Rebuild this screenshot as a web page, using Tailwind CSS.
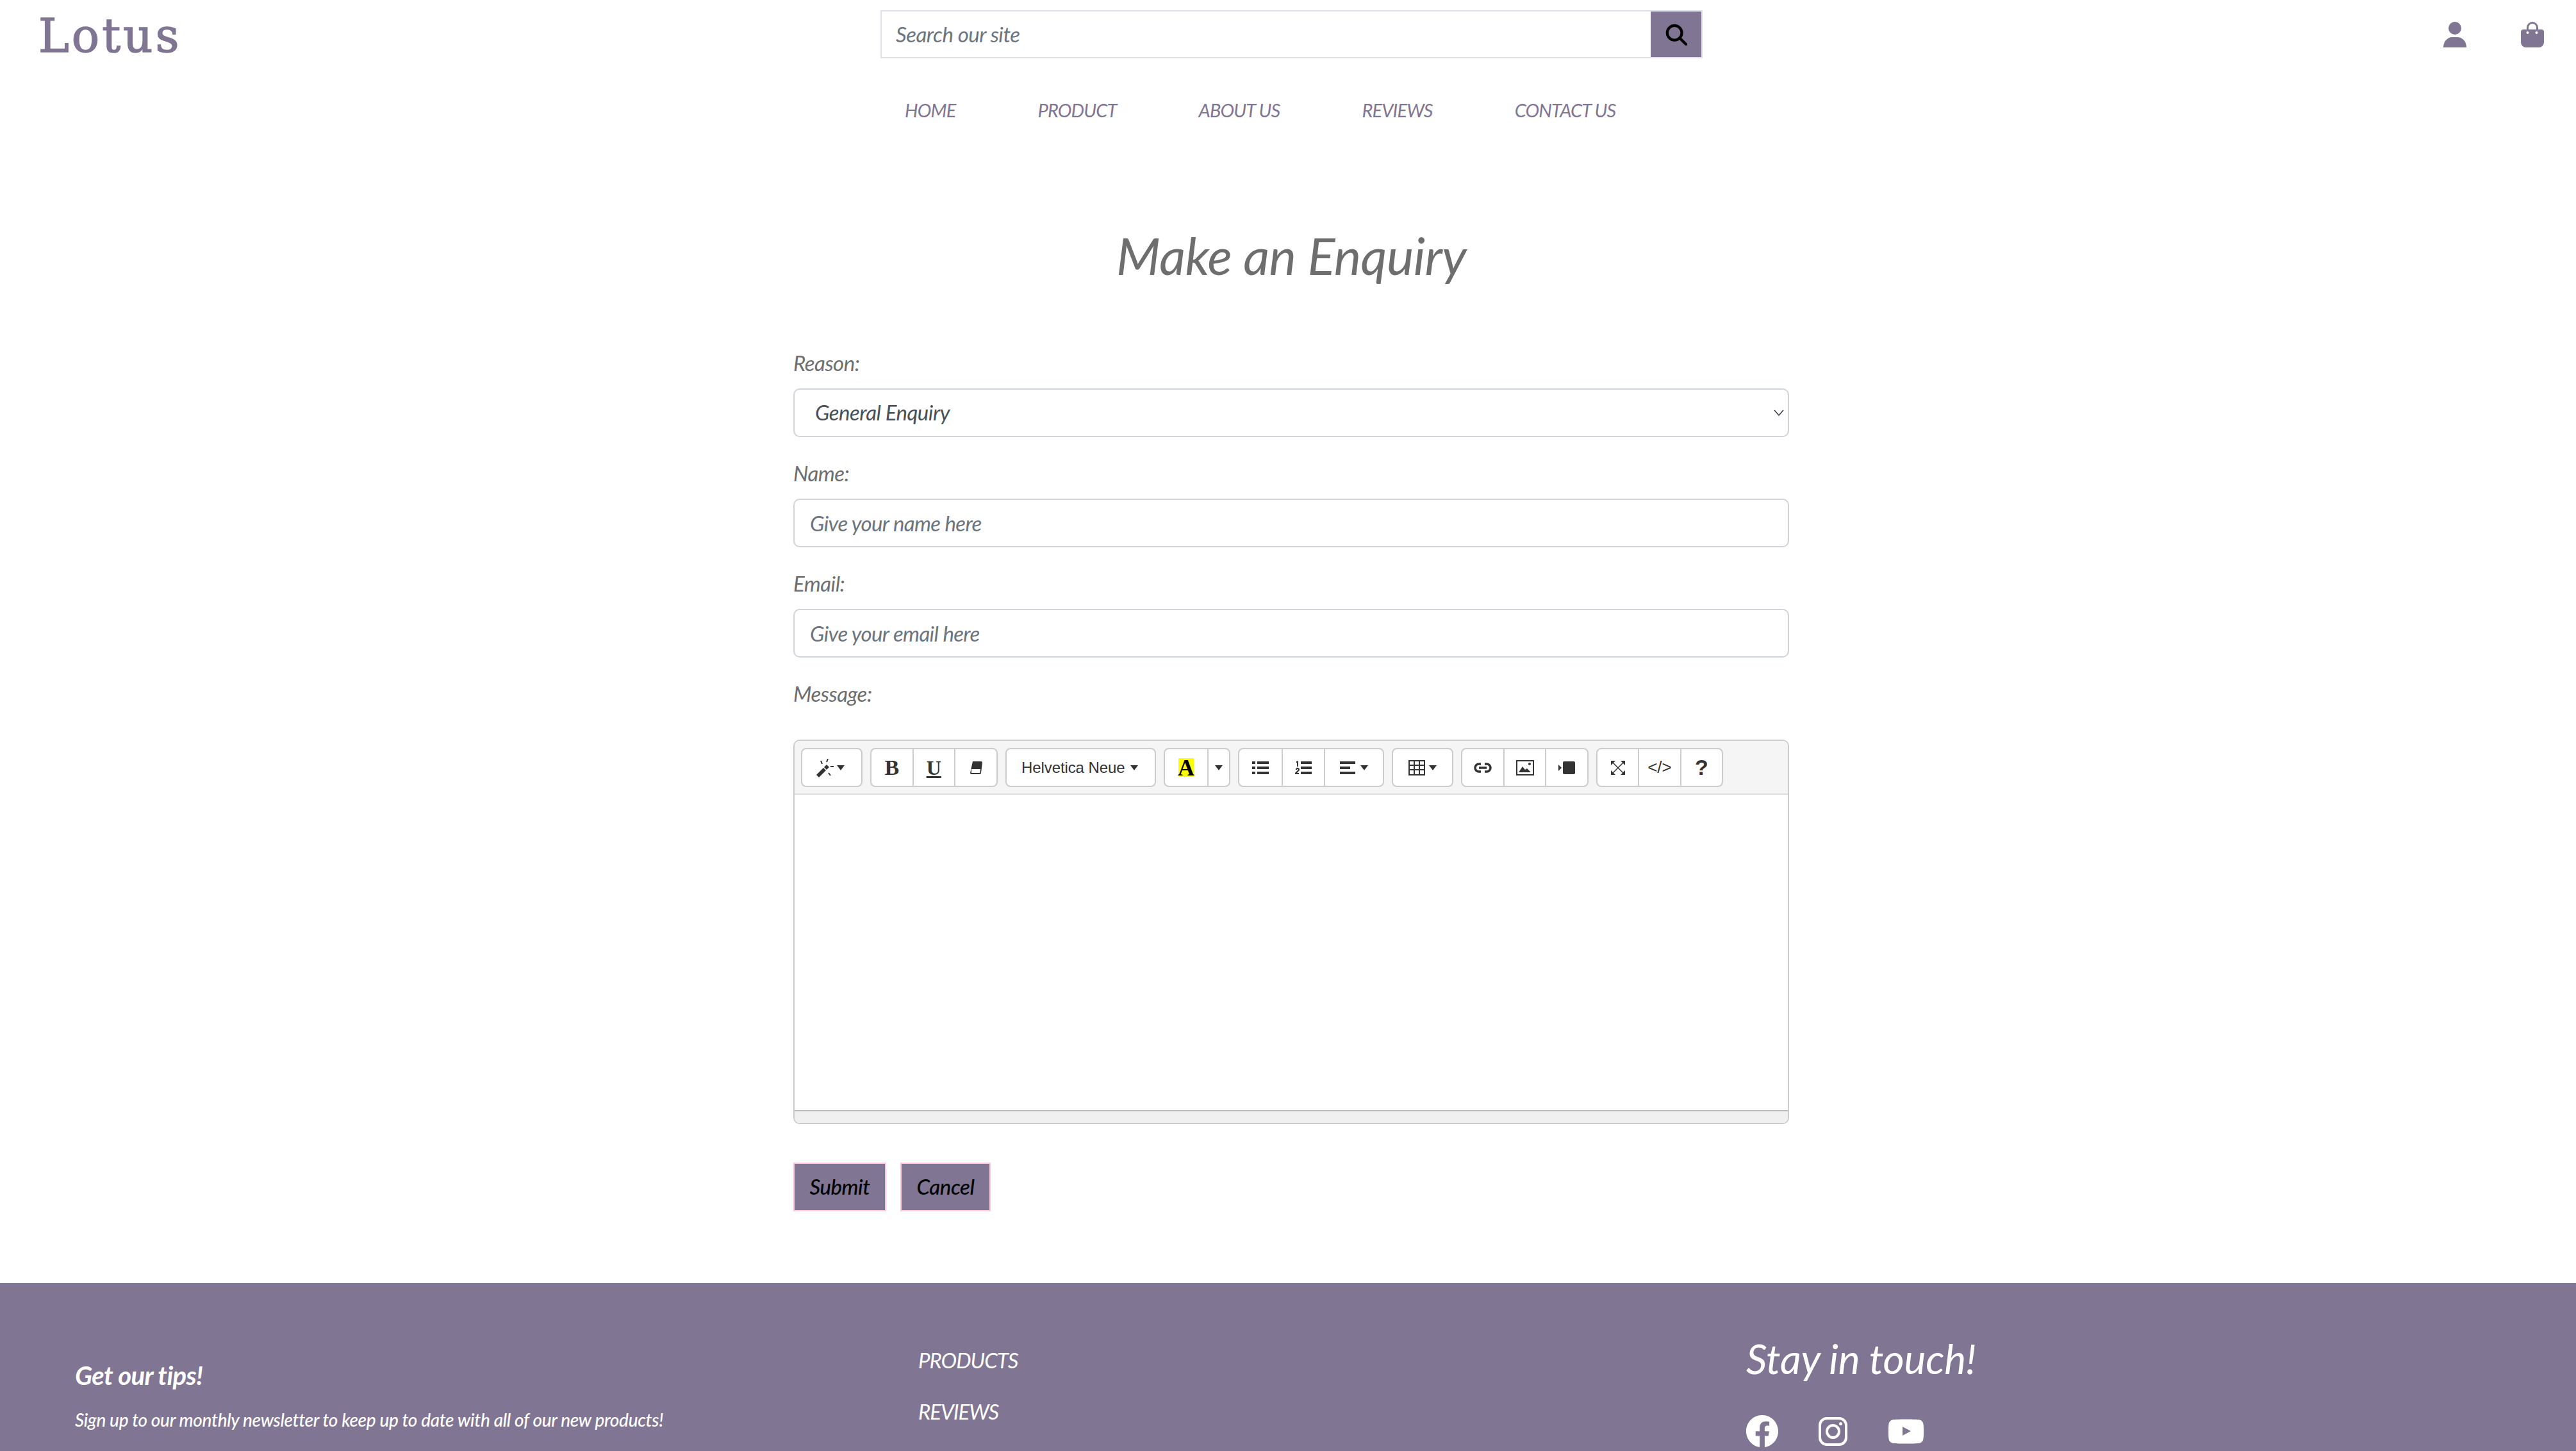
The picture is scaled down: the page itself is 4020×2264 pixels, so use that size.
<!DOCTYPE html>
<html lang="en">
<head>
  <meta charset="UTF-8" />
  <title>Lotus - Make an Enquiry</title>
  <script src="https://cdn.jsdelivr.net/npm/@tailwindcss/browser@4"></script>
</head>
<body class="h-[2264px] overflow-hidden bg-white font-['Lato',sans-serif] italic text-[#6c757d]">

  <!-- Header -->
  <header class="grid grid-cols-[1374px_1283px_1fr] pt-[16px]">
    <a class="pl-[60px] pt-[4px] h-[75px] flex items-center font-['DejaVu_Serif',serif] not-italic text-[72px] tracking-[4px] [-webkit-text-stroke:1.5px_#807593] text-[#807593]">Lotus</a>
    <div>
      <form class="flex h-[75px] border-[2.5px] border-[#dee2e6]">
        <input placeholder="Search our site" class="flex-1 pl-[22px] text-[33px] tracking-[-0.5px] italic outline-none placeholder:text-[#6c757d]" />
        <button type="button" class="w-[79px] bg-[#807593] flex items-center justify-center">
          <svg width="34" height="34" viewBox="0 0 24 24" fill="none" stroke="#000" stroke-width="3"><circle cx="10" cy="10" r="8"/><path d="M16 16l7 7" stroke-linecap="round"/></svg>
        </button>
      </form>
      <nav class="mt-[61px] h-[40px] flex items-center pl-[38px] gap-[128px] text-[29px] tracking-[-0.85px] text-[#807593] whitespace-nowrap">
        <a>HOME</a>
        <a>PRODUCT</a>
        <a>ABOUT US</a>
        <a>REVIEWS</a>
        <a>CONTACT US</a>
      </nav>
    </div>
    <div class="flex justify-end h-[75px] items-center gap-[85px] pr-[50px]">
      <svg width="36" height="40" viewBox="0 0 36 40" fill="#807593"><circle cx="18" cy="10" r="10"/><path d="M0 40c0-10 7-16 14-16h8c7 0 14 6 14 16z"/></svg>
      <svg width="36" height="40" viewBox="0 0 36 40" fill="#807593" fill-rule="evenodd"><path d="M9 12V9a9 9 0 0 1 18 0v3h5a4 4 0 0 1 4 4v16a8 8 0 0 1-8 8H8a8 8 0 0 1-8-8V16a4 4 0 0 1 4-4zm3 0h12V9a6 6 0 0 0-12 0zm-1.500 3a2 2 0 1 0 .01 0zm14 0a2 2 0 1 0 .01 0z"/></svg>
    </div>
  </header>

  <!-- Enquiry form -->
  <main class="ml-[1238px] w-[1554px]">
    <h1 class="mt-[156px] mb-[98px] h-[100px] leading-[100px] text-center text-[80px] tracking-[-0.6px] text-[#6e6e6e]">Make an Enquiry</h1>

    <label class="block h-[40px] leading-[40px] text-[33px] tracking-[-0.5px] text-[#6e6e6e]">Reason:</label>
    <div class="relative mt-[20px] mb-[36px]">
      <select class="w-full h-[76px] appearance-none border-[2.5px] border-[#ced4da] rounded-[10px] pl-[32px] text-[33px] tracking-[-0.5px] italic text-[#495057] bg-white">
        <option>General Enquiry</option>
      </select>
      <svg class="absolute right-[8px] top-[33px]" width="16" height="10" viewBox="0 0 16 10" fill="none" stroke="#343a40" stroke-width="1.500"><path d="M1 1l7 8 7-8"/></svg>
    </div>

    <label class="block h-[40px] leading-[40px] text-[33px] tracking-[-0.5px] text-[#6e6e6e]">Name:</label>
    <input placeholder="Give your name here" class="block w-full h-[76px] mt-[20px] mb-[36px] border-[2.5px] border-[#ced4da] rounded-[10px] pl-[24px] text-[33px] tracking-[-0.65px] italic placeholder:text-[#6c757d]" />

    <label class="block h-[40px] leading-[40px] text-[33px] tracking-[-0.5px] text-[#6e6e6e]">Email:</label>
    <input placeholder="Give your email here" class="block w-full h-[76px] mt-[20px] mb-[36px] border-[2.5px] border-[#ced4da] rounded-[10px] pl-[24px] text-[33px] tracking-[-0.65px] italic placeholder:text-[#6c757d]" />

    <label class="block h-[40px] leading-[40px] text-[33px] tracking-[-0.5px] text-[#6e6e6e]">Message:</label>

    <!-- Rich text editor -->
    <div class="mt-[52px] h-[600px] flex flex-col border-[2.5px] border-[#ccc] rounded-[10px] overflow-hidden not-italic font-['Liberation_Sans',sans-serif] text-[#333]">
      <div class="h-[84px] shrink-0 flex items-start gap-[12px] pt-[11px] pl-[10px] bg-[#f5f5f5] border-b-[2.5px] border-[#ddd]">
        <div class="flex h-[61px] w-[96px] items-center justify-center gap-[3px] pr-[6px] bg-white border-[2.5px] border-[#ccc] rounded-[8px]">
          <svg width="30" height="30" viewBox="0 0 30 30" fill="#333"><path d="M1 26l11-11 4 4-11 11z"/><path d="M13 14l4-4 4 4-4 4z" fill="#333"/><path d="M8 4l2 5M19 1l-2 5M23 13h5M20 23l3 4" stroke="#333" stroke-width="2"/></svg>
          <svg width="12" height="8" viewBox="0 0 12 8" fill="#333"><path d="M0 0h12L6 8z"/></svg>
        </div>
        <div class="flex h-[61px] w-[198.500px] bg-white border-[2.5px] border-[#ccc] rounded-[8px]">
          <span class="flex-1 flex items-center justify-center font-['Liberation_Serif',serif] font-bold text-[34px]">B</span>
          <span class="flex-1 flex items-center justify-center border-l-[2px] border-[#ccc] font-['Liberation_Serif',serif] font-bold text-[32px] underline">U</span>
          <span class="flex-1 flex items-center justify-center border-l-[2px] border-[#ccc]">
            <svg width="20" height="20" viewBox="0 0 20 20"><path d="M5 0h13a2 2 0 0 1 2 2l-2 16a2 2 0 0 1-2 2H3a2 2 0 0 1-2-2z" fill="#333"/><path d="M3 12h14l-.8 6H3z" fill="#fff"/></svg>
          </span>
        </div>
        <div class="flex h-[61px] w-[235.500px] items-center justify-center gap-[9px] pr-[2px] bg-white border-[2.5px] border-[#ccc] rounded-[8px] text-[24px] tracking-[-0.1px]">
          Helvetica Neue
          <svg width="12" height="8" viewBox="0 0 12 8" fill="#333"><path d="M0 0h12L6 8z"/></svg>
        </div>
        <div class="flex h-[61px] w-[104px] bg-white border-[2.5px] border-[#ccc] rounded-[8px]">
          <span class="w-[66px] flex items-center justify-center"><span class="w-[24px] h-[29px] bg-[#ff0] flex items-center justify-center font-['Liberation_Serif',serif] font-bold text-[36px] text-black leading-none">A</span></span>
          <span class="flex-1 flex items-center justify-center border-l-[2px] border-[#ccc]"><svg width="12" height="8" viewBox="0 0 12 8" fill="#333"><path d="M0 0h12L6 8z"/></svg></span>
        </div>
        <div class="flex h-[61px] w-[228px] bg-white border-[2.5px] border-[#ccc] rounded-[8px]">
          <span class="w-[66px] flex items-center justify-center">
            <svg width="26" height="22" viewBox="0 0 26 22" fill="#333"><path d="M0 1h5v4H0zM8 1h18v4H8zM0 9h5v4H0zM8 9h18v4H8zM0 17h5v4H0zM8 17h18v4H8z"/></svg>
          </span>
          <span class="w-[66px] flex items-center justify-center border-l-[2px] border-[#ccc]">
            <svg width="26" height="22" viewBox="0 0 26 22" fill="#333"><path d="M9 1h17v4H9zM9 9h17v4H9zM9 17h17v4H9z"/><path d="M2 1l3-1v9H3V3H2zM1 14a3 3 0 1 1 5 2l-3 3h3v2H0v-2l4-4a1 1 0 1 0-1-1z"/></svg>
          </span>
          <span class="flex-1 flex items-center justify-center gap-[8px] border-l-[2px] border-[#ccc]">
            <svg width="24" height="22" viewBox="0 0 24 22" fill="#333"><path d="M0 1h24v4H0zM0 9h16v4H0zM0 17h24v4H0z"/></svg>
            <svg width="12" height="8" viewBox="0 0 12 8" fill="#333"><path d="M0 0h12L6 8z"/></svg>
          </span>
        </div>
        <div class="flex h-[61px] w-[96px] items-center justify-center gap-[6px] bg-white border-[2.5px] border-[#ccc] rounded-[8px]">
          <svg width="26" height="24" viewBox="0 0 26 24" fill="none" stroke="#333" stroke-width="2"><path d="M1 1h24v22H1zM1 8h24M1 15h24M9 1v22M17 1v22"/></svg>
          <svg width="12" height="8" viewBox="0 0 12 8" fill="#333"><path d="M0 0h12L6 8z"/></svg>
        </div>
        <div class="flex h-[61px] w-[199px] bg-white border-[2.5px] border-[#ccc] rounded-[8px]">
          <span class="flex-1 flex items-center justify-center">
            <svg width="28" height="16" viewBox="0 0 28 16" fill="none" stroke="#333" stroke-width="3.500"><path d="M11 2H8a6 6 0 0 0 0 12h3M17 2h3a6 6 0 0 1 0 12h-3M8 8h12"/></svg>
          </span>
          <span class="flex-1 flex items-center justify-center border-l-[2px] border-[#ccc]">
            <svg width="28" height="24" viewBox="0 0 28 24" fill="#333"><path d="M1 1h26v22H1z" fill="none" stroke="#333" stroke-width="2"/><path d="M4 19l6-9 4 5 3-2 6 6z"/><circle cx="21" cy="6" r="2"/></svg>
          </span>
          <span class="flex-1 flex items-center justify-center border-l-[2px] border-[#ccc]">
            <svg width="26" height="22" viewBox="0 0 26 22" fill="#333"><rect x="7" y="1" width="19" height="20" rx="2"/><path d="M0 6l5 5-5 5z"/></svg>
          </span>
        </div>
        <div class="flex h-[61px] w-[198px] bg-white border-[2.5px] border-[#ccc] rounded-[8px]">
          <span class="flex-1 flex items-center justify-center">
            <svg width="22" height="22" viewBox="0 0 22 22" fill="#333"><path d="M3 3l16 16M19 3L3 19" stroke="#333" stroke-width="1.500" fill="none"/><path d="M0 0h7L0 7zM22 0v7l-7-7zM0 22v-7l7 7zM22 22h-7l7-7z"/></svg>
          </span>
          <span class="flex-1 flex items-center justify-center border-l-[2px] border-[#ccc] text-[26px]">&lt;/&gt;</span>
          <span class="flex-1 flex items-center justify-center border-l-[2px] border-[#ccc] font-bold text-[34px]">?</span>
        </div>
      </div>
      <div class="flex-1 bg-white"></div>
      <div class="h-[20px] shrink-0 bg-[#f0f0f0] border-t-[2.5px] border-[#bbb]"></div>
    </div>

    <div class="mt-[60px] flex gap-[22px]">
      <button type="button" class="h-[76px] w-[145px] bg-[#807593] border-[2.5px] border-[#ffc8d6] text-[33px] tracking-[-0.5px] font-medium italic text-black">Submit</button>
      <button type="button" class="h-[76px] w-[141px] bg-[#807593] border-[2.5px] border-[#ffc8d6] text-[33px] tracking-[-0.5px] font-medium italic text-black">Cancel</button>
    </div>
  </main>

  <!-- Footer -->
  <footer class="mt-[112px] h-[262px] bg-[#807593] text-white grid grid-cols-[1316px_1292px_1fr] pl-[117px]">
    <div>
      <h3 class="mt-[116px] h-[56px] leading-[56px] text-[40px] tracking-[-0.6px] font-bold">Get our tips!</h3>
      <p class="mt-[21px] h-[40px] leading-[40px] text-[28px] tracking-[-0.33px] font-medium whitespace-nowrap">Sign up to our monthly newsletter to keep up to date with all of our new products!</p>
    </div>
    <div class="text-[33px] tracking-[-1px]">
      <a class="block mt-[98px] h-[44px] leading-[44px]">PRODUCTS</a>
      <a class="block mt-[36px] h-[44px] leading-[44px]">REVIEWS</a>
    </div>
    <div>
      <h3 class="mt-[80px] h-[76px] leading-[76px] text-[64px] tracking-[-0.2px]">Stay in touch!</h3>
      <div class="mt-[50px] flex items-center">
        <svg class="mr-[63px]" width="50" height="50" viewBox="0 0 16 16" fill="#fff"><path d="M16 8.049c0-4.446-3.582-8.05-8-8.05C3.580 0-.002 3.603-.002 8.050c0 4.017 2.926 7.347 6.750 7.951v-5.625h-2.030V8.050H6.750V6.275c0-2.017 1.195-3.131 3.022-3.131.876 0 1.791.157 1.791.157v1.980h-1.009c-.993 0-1.303.621-1.303 1.258v1.510h2.218l-.354 2.326H9.250V16c3.824-.604 6.750-3.934 6.750-7.951z"/></svg>
        <svg class="mr-[64px]" width="45" height="45" viewBox="0 0 45 45" fill="none" stroke="#fff" stroke-width="4"><rect x="2" y="2" width="41" height="41" rx="11"/><circle cx="22.500" cy="22.500" r="9.500"/><circle cx="34.500" cy="10.500" r="2.500" fill="#fff" stroke="none"/></svg>
        <svg width="55" height="39" viewBox="0 0 55 39" fill="#fff" fill-rule="evenodd"><path d="M8 1C16 .3 39 .3 47 1c4 .4 7 3 7.500 7 .7 6 .7 17 0 23-.5 4-3.500 6.600-7.500 7-8 .7-31 .7-39 0-4-.4-7-3-7.500-7-.7-6-.7-17 0-23C1 4 4 1.400 8 1zM22 12v14l13-7z"/></svg>
      </div>
    </div>
  </footer>

</body>
</html>
